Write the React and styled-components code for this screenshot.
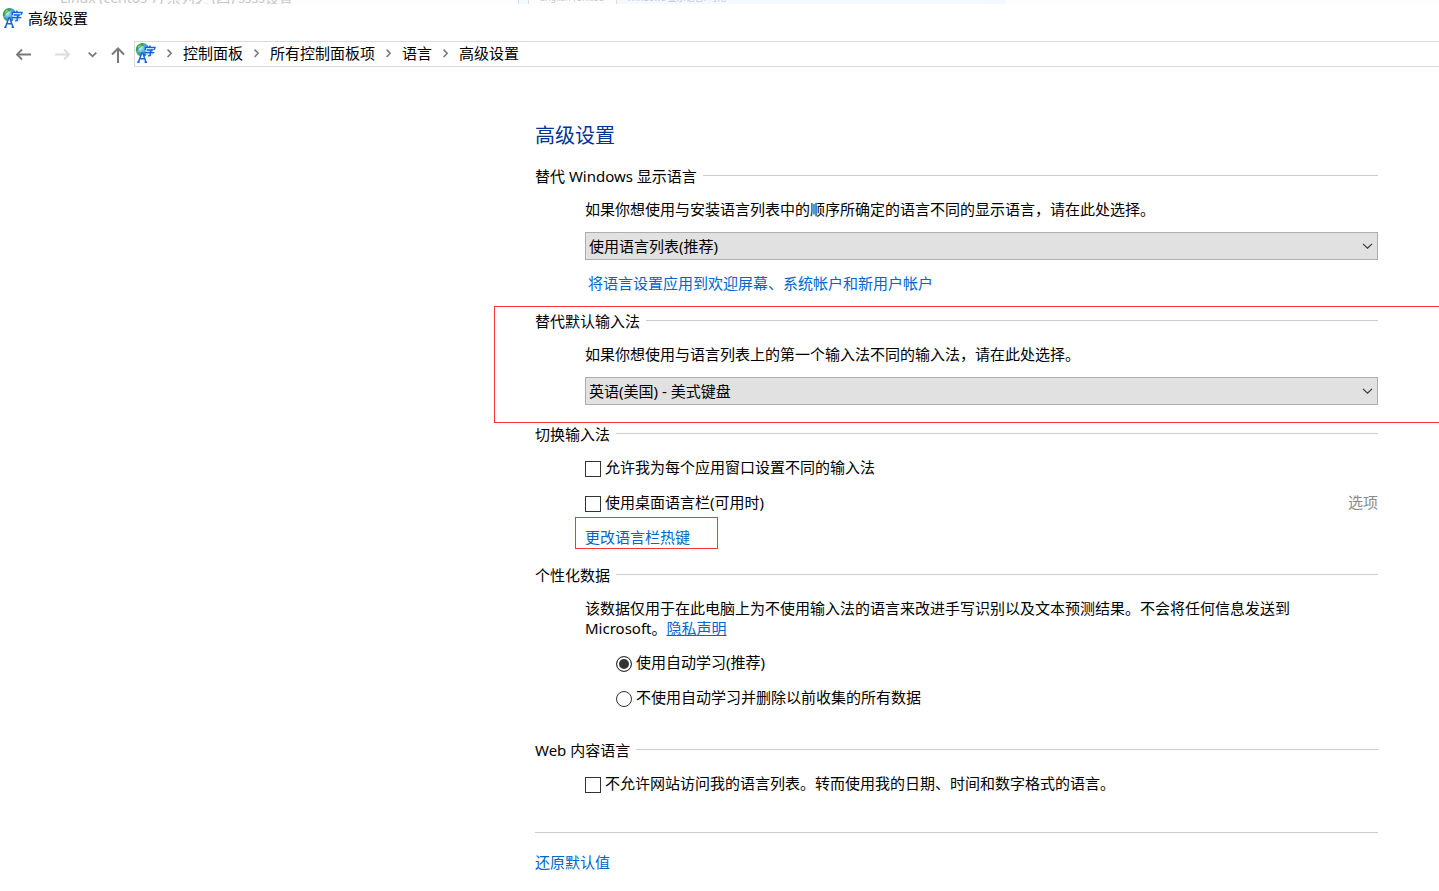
import { useState } from "react";
import styled, { createGlobalStyle, css } from "styled-components";

const colors = {
  text: "#000000",
  heading: "#003399",
  link: "#0066cc",
  muted: "#8a8a8a",
  rule: "#cccccc",
  mark: "#ff3333",
  control: "#333333",
};

const GlobalStyle = createGlobalStyle`
  * {
    box-sizing: border-box;
  }

  body {
    margin: 0;
    background: #ffffff;
    color: ${colors.text};
    font-family: "Noto Sans", "Noto Sans CJK SC", sans-serif;
    font-size: 15px;
    line-height: 20px;
  }
`;

const BackStrip = styled.div`
  height: 4px;
  padding-left: 60px;
  display: flex;
  align-items: flex-end;
  overflow: hidden;
  background: #fdfdfd;
  color: #c8c8c8;
  line-height: 12px;
  white-space: nowrap;
`;

const BackTitle = styled.span`
  width: 458px;
  font-size: 14px;
`;

const BackTabs = styled.div`
  width: 488px;
  padding-left: 9px;
  display: flex;
  gap: 10px;
  border-left: 1px solid #d5dde5;
  background: #f3f9ff;
  font-size: 9px;
`;

const BackTab = styled.span`
  width: 89px;
  padding-left: 11px;
  border: 1px solid #dddddd;
  border-width: 0 1px;
  background: #fdfdfd;
`;

const TitleBar = styled.header`
  height: 28px;
  padding-left: 2px;
  display: flex;
  align-items: center;
  gap: 5px;
`;

const NavBar = styled.nav`
  margin-top: 9px;
  display: flex;
  align-items: center;
`;

const NavButtons = styled.div`
  width: 134px;
  padding-left: 15px;
  display: flex;
  align-items: center;
`;

const NavButton = styled.button`
  margin-right: ${({ $gap }) => $gap}px;
  padding: 0;
  border: 0;
  background: none;
  display: flex;
  color: ${({ $faded }) => ($faded ? "#dcdcdc" : "#7a7a7a")};
`;

const AddressBar = styled.div`
  flex: 1;
  height: 26px;
  padding-bottom: 2px;
  display: flex;
  align-items: center;
  gap: 11px;
  border: 1px solid #d9d9d9;
  border-right: 0;
  color: #7a7a7a;
`;

const Crumb = styled.a`
  color: ${colors.text};
  text-decoration: none;
`;

const Main = styled.main`
  padding: 55px 0 18px 494px;
`;

const Heading = styled.h1`
  margin: 0 0 15px;
  padding-left: 41px;
  color: ${colors.heading};
  font-size: 20px;
  font-weight: 400;
  line-height: 28px;
`;

const Group = styled.section`
  padding: 0 61px ${({ $end }) => $end}px 40px;
  border: 1px solid transparent;
  border-right: 0;
  border-bottom: 0;

  ${({ $marked }) =>
    $marked &&
    css`
      padding-top: 4px;
      border-color: ${colors.mark};
      border-bottom: 1px solid ${colors.mark};
    `}
`;

const GroupTitle = styled.h2`
  margin: 0 0 13px;
  display: flex;
  align-items: center;
  gap: 6px;
  font-size: 15px;
  font-weight: 400;

  &::after {
    content: "";
    flex: 1;
    height: 1px;
    margin-bottom: 2px;
    background: ${colors.rule};
  }
`;

const GroupBody = styled.div`
  padding-left: 50px;
`;

const Text = styled.p`
  max-width: 720px;
  margin: 0;
`;

const FieldLabel = styled.label`
  display: block;
`;

const SelectBox = styled.div`
  position: relative;
  margin-top: 13px;

  svg {
    position: absolute;
    right: 5px;
    top: 11px;
    pointer-events: none;
  }
`;

const Select = styled.select`
  display: block;
  width: 100%;
  height: 28px;
  padding: 0 24px 0 3px;
  border: 1px solid #adadad;
  border-radius: 0;
  background: #e1e1e1;
  color: ${colors.text};
  font: inherit;
  appearance: none;
`;

const Link = styled.a`
  color: ${colors.link};
  text-decoration: ${({ $underlined }) => ($underlined ? "underline" : "none")};
`;

const WelcomeLink = styled.div`
  margin-top: 13px;
  padding-left: 3px;
`;

const HotkeyLink = styled.div`
  width: 143px;
  height: 32px;
  margin: 5px 0 0 -10px;
  padding: 9px 9px 0;
  border: 1px solid ${colors.mark};
`;

const OptionList = styled.div`
  margin-top: ${({ $spaced }) => ($spaced ? "14px" : "0")};
  padding-left: ${({ $spaced }) => ($spaced ? "31px" : "0")};
  display: grid;
  gap: 15px;
`;

const OptionRow = styled.div`
  display: flex;
  justify-content: space-between;
`;

const Option = styled.label`
  display: flex;
  align-items: center;
  gap: 4px;
`;

const Tick = styled.input`
  appearance: none;
  width: 16px;
  height: 16px;
  margin: 4px 0 0;
  border: 1px solid ${colors.control};
  background: #ffffff;

  &[type="radio"] {
    border-radius: 50%;
  }

  &:checked {
    background: ${colors.control};
    box-shadow: inset 0 0 0 2px #ffffff;
  }
`;

const Disabled = styled.span`
  color: ${colors.muted};
`;

const Footer = styled.footer`
  margin: 38px 61px 0 41px;
  padding-top: 19px;
  border-top: 1px solid ${colors.rule};
`;

const LanguageIcon = ({ id }) => (
  <svg width="21" height="20" viewBox="0 0 21 20" aria-hidden="true">
    <defs>
      <radialGradient id={id} cx="32%" cy="35%" r="75%">
        <stop offset="0" stopColor="#d4f6ff" />
        <stop offset="0.45" stopColor="#5db4e8" />
        <stop offset="1" stopColor="#1a55b4" />
      </radialGradient>
    </defs>
    <circle cx="7.5" cy="6.8" r="6.8" fill={`url(#${id})`} />
    <path d="M1 5 Q2.5 1 7 .2 L10 .8 L8 3 L6 3.4 L5 5 L3.5 5.5 L3 8 L1 8 Z" fill="#3aa548" />
    <path d="M3 3.6 L6 1.6 L5.4 3.4 L3.4 5 Z" fill="#9ddc6c" />
    <path d="M1.5 9.5 L4 9 L6 11 L5 13 L3 12 Z" fill="#3fae62" />
    <path d="M10 4.5 H20 V7.5 H18 V12.5 H11 Z" fill="#c5e6fb" />
    <g fill="none" stroke="#1560dd" strokeWidth="1.4">
      <path d="M14.6 2.4 L15.2 4 M10.3 7 V4.4 H20 L19.3 6.6 M11.8 7 H17.2 L15.2 9 V12.4 L13.2 13 M9.8 9.6 H19.4" />
    </g>
    <path d="M6.4 10 H8.2 L11 19 H3.6 Z" fill="#ffffff" />
    <g fill="none" stroke="#1a62d8" strokeWidth="1.5">
      <path d="M3.4 19.2 L6.8 10 H7.8 L11 19.2 M4.8 15.8 H9.8 M2.2 19.2 H4.6 M9.6 19.2 H12" />
    </g>
  </svg>
);

const BackArrow = () => (
  <svg width="17" height="14" viewBox="0 0 17 14" fill="none" stroke="currentColor" strokeWidth="1.8">
    <path d="M7 2.5 L2 7.5 L7 12.5 M2 7.5 H16" />
  </svg>
);

const ForwardArrow = () => (
  <svg width="17" height="14" viewBox="0 0 17 14" fill="none" stroke="currentColor" strokeWidth="1.8">
    <path d="M10 2.5 L15 7.5 L10 12.5 M1 7.5 H15" />
  </svg>
);

const UpArrow = () => (
  <svg width="16" height="17" viewBox="0 0 16 17" fill="none" stroke="currentColor" strokeWidth="2">
    <path d="M2 8.5 L8 2.5 L14 8.5 M8 2.5 V17" />
  </svg>
);

const HistoryChevron = () => (
  <svg width="9" height="8" viewBox="0 0 9 8" fill="none" stroke="currentColor" strokeWidth="1.8">
    <path d="M.7 2.7 L4.5 6.3 L8.3 2.7" />
  </svg>
);

const CrumbChevron = () => (
  <svg width="5" height="9" viewBox="0 0 5 9" fill="none" stroke="currentColor" strokeWidth="1.6">
    <path d="M.6 .6 L4.2 4.3 L.6 8" />
  </svg>
);

const SelectChevron = () => (
  <svg width="11" height="6" viewBox="0 0 11 6" fill="none" stroke="#333333" strokeWidth="1.1">
    <path d="M1 .8 L5.5 5.2 L10 .8" />
  </svg>
);

const crumbs = ["控制面板", "所有控制面板项", "语言", "高级设置"];

const SelectField = ({ id, label, value }) => (
  <>
    <FieldLabel htmlFor={id}>{label}</FieldLabel>
    <SelectBox>
      <Select id={id} defaultValue={value}>
        <option>{value}</option>
      </Select>
      <SelectChevron />
    </SelectBox>
  </>
);

const App = () => {
  const [learning, setLearning] = useState("auto");

  return (
    <>
      <GlobalStyle />
      <BackStrip aria-hidden="true">
        <BackTitle>Linux (centos 7) 系列之 (四) ssss设置</BackTitle>
        <BackTabs>
          <BackTab>English (United</BackTab>
          <span>Windows 显示语言: 可用</span>
        </BackTabs>
      </BackStrip>
      <TitleBar>
        <LanguageIcon id="title-globe" />
        <span>高级设置</span>
      </TitleBar>
      <NavBar>
        <NavButtons>
          <NavButton aria-label="后退" $gap={22}>
            <BackArrow />
          </NavButton>
          <NavButton aria-label="前进" $gap={17} $faded>
            <ForwardArrow />
          </NavButton>
          <NavButton aria-label="最近浏览的位置" $gap={13}>
            <HistoryChevron />
          </NavButton>
          <NavButton aria-label="上移" $gap={0}>
            <UpArrow />
          </NavButton>
        </NavButtons>
        <AddressBar>
          <LanguageIcon id="address-globe" />
          {crumbs.map((crumb) => [
            <CrumbChevron key={`${crumb}-chevron`} />,
            <Crumb key={crumb} href="#">
              {crumb}
            </Crumb>,
          ])}
        </AddressBar>
      </NavBar>

      <Main>
        <Heading>高级设置</Heading>

        <Group $end={13}>
          <GroupTitle>替代 Windows 显示语言</GroupTitle>
          <GroupBody>
            <SelectField
              id="display-language"
              label="如果你想使用与安装语言列表中的顺序所确定的语言不同的显示语言，请在此处选择。"
              value="使用语言列表(推荐)"
            />
            <WelcomeLink>
              <Link href="#">将语言设置应用到欢迎屏幕、系统帐户和新用户帐户</Link>
            </WelcomeLink>
          </GroupBody>
        </Group>

        <Group $marked $end={17}>
          <GroupTitle>替代默认输入法</GroupTitle>
          <GroupBody>
            <SelectField
              id="input-method"
              label="如果你想使用与语言列表上的第一个输入法不同的输入法，请在此处选择。"
              value="英语(美国) - 美式键盘"
            />
          </GroupBody>
        </Group>

        <Group $end={15}>
          <GroupTitle>切换输入法</GroupTitle>
          <GroupBody>
            <OptionList>
              <Option>
                <Tick type="checkbox" />
                允许我为每个应用窗口设置不同的输入法
              </Option>
              <OptionRow>
                <Option>
                  <Tick type="checkbox" />
                  使用桌面语言栏(可用时)
                </Option>
                <Disabled>选项</Disabled>
              </OptionRow>
            </OptionList>
            <HotkeyLink>
              <Link href="#">更改语言栏热键</Link>
            </HotkeyLink>
          </GroupBody>
        </Group>

        <Group $end={32}>
          <GroupTitle>个性化数据</GroupTitle>
          <GroupBody>
            <Text>
              该数据仅用于在此电脑上为不使用输入法的语言来改进手写识别以及文本预测结果。不会将任何信息发送到
              Microsoft。
              <Link href="#" $underlined>
                隐私声明
              </Link>
            </Text>
            <OptionList $spaced>
              <Option>
                <Tick
                  type="radio"
                  name="learning"
                  checked={learning === "auto"}
                  onChange={() => setLearning("auto")}
                />
                使用自动学习(推荐)
              </Option>
              <Option>
                <Tick
                  type="radio"
                  name="learning"
                  checked={learning === "off"}
                  onChange={() => setLearning("off")}
                />
                不使用自动学习并删除以前收集的所有数据
              </Option>
            </OptionList>
          </GroupBody>
        </Group>

        <Group $end={1}>
          <GroupTitle>Web 内容语言</GroupTitle>
          <GroupBody>
            <Option>
              <Tick type="checkbox" />
              不允许网站访问我的语言列表。转而使用我的日期、时间和数字格式的语言。
            </Option>
          </GroupBody>
        </Group>

        <Footer>
          <Link href="#">还原默认值</Link>
        </Footer>
      </Main>
    </>
  );
};

export default App;
